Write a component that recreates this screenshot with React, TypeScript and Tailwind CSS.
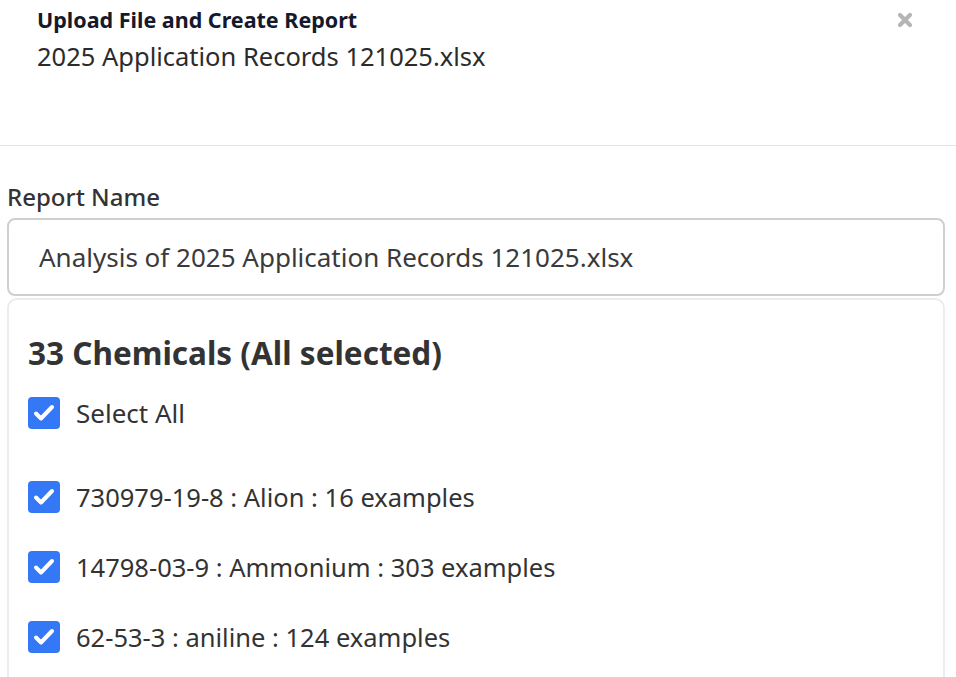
import React from "react";

const chemicals = [
  { cas: "730979-19-8", name: "Alion", count: 16 },
  { cas: "14798-03-9", name: "Ammonium", count: 303 },
  { cas: "62-53-3", name: "aniline", count: 124 },
];

function CheckBox() {
  return (
    <svg className="w-[32px] h-[32px] shrink-0" viewBox="0 0 32 32">
      <rect x="0" y="0" width="32" height="32" rx="4" fill="#3478f6" />
      <path d="M8 16.5l5 5 11-11.5" fill="none" stroke="white" strokeWidth="4" strokeLinecap="round" strokeLinejoin="round" />
    </svg>
  );
}

export default function App() {
  return (
    <div className="h-[677px] overflow-hidden bg-white text-[#333333]" style={{ fontFamily: "'Noto Sans', sans-serif" }}>
      <div className="flex justify-between pl-[37px] pr-[43px] pt-[6px] h-[146px] border-b border-[#e3e3e8]">
        <div>
          <div className="text-[21.5px] font-bold leading-[28px] text-[#141a2b]">Upload File and Create Report</div>
          <div className="text-[25.5px] leading-[34px] mt-[5px] text-[#2b2b2b]">2025 Application Records 121025.xlsx</div>
        </div>
        <svg className="w-[16px] h-[16px] mt-[6px]" viewBox="0 0 16 16">
          <path d="M3 3l10 10M13 3L3 13" stroke="#b5b5b5" strokeWidth="4.2" strokeLinecap="round" />
        </svg>
      </div>

      <div className="pl-[7px] pr-[11px] pt-[35px]">
        <div className="text-[24px] font-medium leading-[32px] text-[#333333]">Report Name</div>
        <div className="mt-[5px] h-[78px] rounded-[8px] border-2 border-[#cfcfcf] flex items-center px-[30px] text-[26px] text-[#3a3a3a]">
          Analysis of 2025 Application Records 121025.xlsx
        </div>
        <div className="mt-[2px] rounded-[10px] border-2 border-[#ececf0] px-[19px] pt-[33px] h-[500px]">
          <div className="text-[31.5px] font-bold leading-[40px] text-[#333333]">33 Chemicals (All selected)</div>
          <div className="mt-[24px] flex items-center gap-[16px] text-[26px] leading-[32px]">
            <CheckBox />
            <span>Select All</span>
          </div>
          <div className="mt-[52px] flex flex-col gap-[38px]">
            {chemicals.map((c) => (
              <div key={c.cas} className="flex items-center gap-[16px] text-[25.5px] leading-[32px]">
                <CheckBox />
                <span>{c.cas} : {c.name} : {c.count} examples</span>
              </div>
            ))}
          </div>
        </div>
      </div>
    </div>
  );
}
